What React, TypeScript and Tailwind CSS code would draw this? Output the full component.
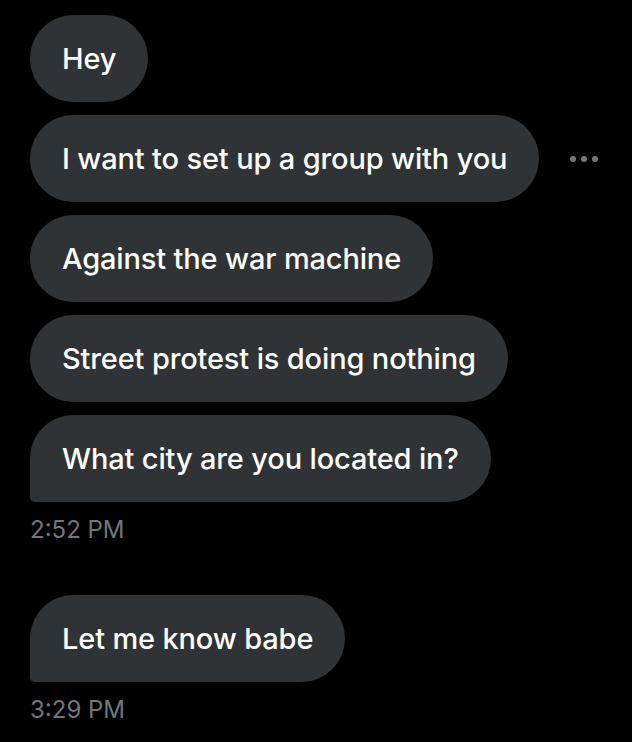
const Dots = () => (
    <svg width="30" height="8" viewBox="0 0 30 8" className="fill-[#71767b]">
        <circle cx="4" cy="4" r="3" />
        <circle cx="15" cy="4" r="3" />
        <circle cx="26" cy="4" r="3" />
    </svg>
);

const Bubble = ({ text, last, dots }: { text: string; last?: boolean; dots?: boolean }) => (
    <div className="flex items-center gap-[30px]">
        <div
            className={`bg-[#2f3336] text-white text-[29px] font-medium tracking-[-0.15px] leading-[37px] px-[32px] py-[25px] rounded-[44px] ${last ? 'rounded-bl-[5px]' : ''}`}
        >
            {text}
        </div>
        {dots && <Dots />}
    </div>
);

const Time = ({ children }: { children: string }) => (
    <div className="text-[#71767b] text-[24px] leading-[30px] mt-[13px]">{children}</div>
);

export default function App() {
    return (
        <div className="w-[632px] h-[742px] bg-black overflow-hidden pl-[30px] pt-[15px]" style={{ fontFamily: '"Inter", "Liberation Sans", sans-serif' }}>
            <div className="flex flex-col items-start gap-[13px]">
                <Bubble text="Hey" />
                <Bubble text="I want to set up a group with you" dots />
                <Bubble text="Against the war machine" />
                <Bubble text="Street protest is doing nothing" />
                <Bubble text="What city are you located in?" last />
            </div>
            <Time>2:52 PM</Time>
            <div className="flex flex-col items-start mt-[50px]">
                <Bubble text="Let me know babe" last />
            </div>
            <Time>3:29 PM</Time>
        </div>
    );
}
